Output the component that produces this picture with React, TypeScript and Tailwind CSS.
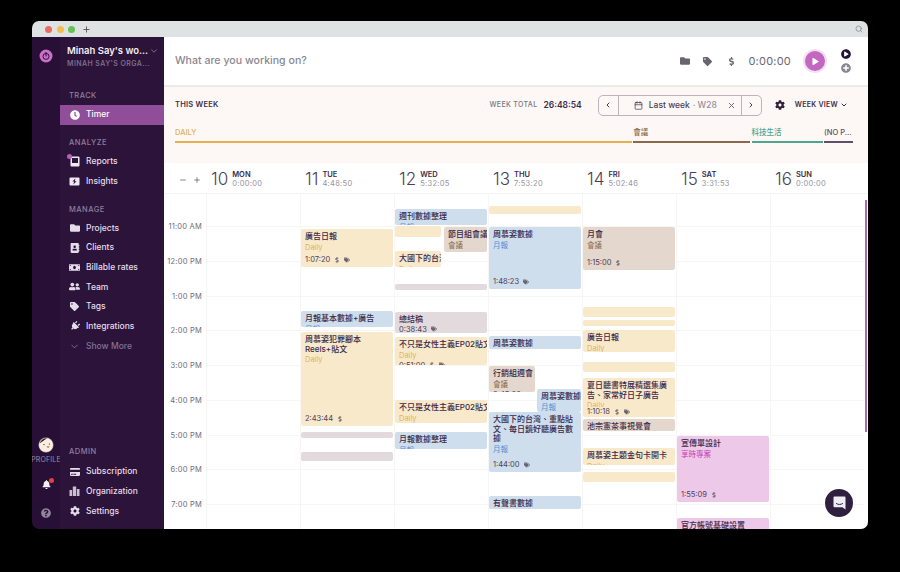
import type { ReactNode } from 'react';
import { ChevronDown, ChevronLeft, ChevronRight, Calendar, X, Search, Plus, Minus } from 'lucide-react';
import {
  FaClock, FaFolder, FaTag, FaTags, FaAddressBook, FaMoneyBill, FaUserFriends, FaPlug, FaCreditCard,
  FaCog, FaBell, FaQuestionCircle, FaPlay, FaPlusCircle, FaPlayCircle, FaDollarSign,
} from 'react-icons/fa';

const YELLOW = { box: 'bg-[#f9e9cb]', sub: 'text-[#e2b35c]' };
const BLUE = { box: 'bg-[#cfdeed]', sub: 'text-[#4e90d2]' };
const BROWN = { box: 'bg-[#e4d8ce]', sub: 'text-[#8a6b4d]' };
const MAUVE = { box: 'bg-[#e3dadd]', sub: 'text-[#6b5a6b]' };
const PINK = { box: 'bg-[#eec8e9]', sub: 'text-[#c23fb0]' };

type Ev = {
  day: number;
  top: number;
  bottom: number;
  left?: number;
  right?: number;
  title?: string;
  sub?: string;
  time?: string;
  money?: boolean;
  tag?: boolean;
  color: { box: string; sub: string };
  nowrap?: boolean;
  squeeze?: boolean;
};

// y values are screen rows, the grid starts at 194. left/right are offsets inside the day column
const events: Ev[] = [
  { day: 1, top: 229, bottom: 267, title: '廣告日報', sub: 'Daily', time: '1:07:20', money: true, tag: true, color: YELLOW },
  { day: 1, top: 311, bottom: 327, title: '月報基本數據+廣告', sub: '月報', color: BLUE, nowrap: true },
  { day: 1, top: 332, bottom: 426, title: '周慕姿犯罪腳本 Reels+貼文', sub: 'Daily', time: '2:43:44', money: true, color: YELLOW },
  { day: 1, top: 432, bottom: 438, color: MAUVE },
  { day: 1, top: 452, bottom: 461, color: MAUVE },
  { day: 2, top: 209, bottom: 225, title: '週刊數據整理', sub: '月報', color: BLUE },
  { day: 2, top: 226, bottom: 237, right: 47, color: YELLOW },
  { day: 2, top: 227, bottom: 252, left: 49, title: '節目組會議', sub: '會議', time: '0:45:00', color: BROWN, nowrap: true },
  { day: 2, top: 251, bottom: 267, right: 47, title: '大國下的台灣', sub: 'Daily', color: YELLOW, nowrap: true },
  { day: 2, top: 284, bottom: 285, color: MAUVE },
  { day: 2, top: 312, bottom: 333, title: '總結稿', time: '0:38:43', tag: true, color: MAUVE },
  { day: 2, top: 337, bottom: 365, title: '不只是女性主義EP02貼文', sub: 'Daily', time: '0:51:00', money: true, tag: true, color: YELLOW, nowrap: true },
  { day: 2, top: 400, bottom: 423, title: '不只是女性主義EP02貼文', sub: 'Daily', color: YELLOW, nowrap: true },
  { day: 2, top: 432, bottom: 449, title: '月報數據整理', sub: '月報', color: BLUE },
  { day: 3, top: 206, bottom: 214, color: YELLOW },
  { day: 3, top: 227, bottom: 289, title: '周慕姿數據', sub: '月報', time: '1:48:23', tag: true, color: BLUE },
  { day: 3, top: 336, bottom: 349, title: '周慕姿數據', color: BLUE },
  { day: 3, top: 366, bottom: 392, right: 47, title: '行銷組週會', sub: '會議', time: '0:45:00', color: BROWN, nowrap: true },
  { day: 3, top: 389, bottom: 412, left: 48, title: '周慕姿數據', sub: '月報', color: BLUE, nowrap: true },
  { day: 3, top: 412, bottom: 472, title: '大國下的台灣、重點貼文、每日鏡好聽廣告數據', sub: '月報', time: '1:44:00', tag: true, color: BLUE },
  { day: 3, top: 496, bottom: 509, title: '有聲書數據', color: BLUE },
  { day: 4, top: 227, bottom: 270, title: '月會', sub: '會議', time: '1:15:00', money: true, color: BROWN },
  { day: 4, top: 307, bottom: 317, color: YELLOW },
  { day: 4, top: 320, bottom: 322, color: YELLOW },
  { day: 4, top: 330, bottom: 352, title: '廣告日報', sub: 'Daily', color: YELLOW },
  { day: 4, top: 362, bottom: 372, color: YELLOW },
  { day: 4, top: 378, bottom: 417, title: '夏日聽書特展精選集廣告、家常好日子廣告', sub: 'Daily', time: '1:10:18', money: true, tag: true, color: YELLOW, squeeze: true },
  { day: 4, top: 419, bottom: 431, title: '池宗憲茶事視覺會', color: BROWN },
  { day: 4, top: 448, bottom: 465, title: '周慕姿主題金句卡開卡', sub: 'Daily', color: YELLOW },
  { day: 4, top: 472, bottom: 482, color: YELLOW },
  { day: 5, top: 436, bottom: 502, title: '宣傳單設計', sub: '享時專案', time: '1:55:09', money: true, color: PINK },
  { day: 5, top: 518, bottom: 560, title: '官方帳號基礎設置', color: PINK },
];

const days = [
  { n: '10', name: 'MON', total: '0:00:00' },
  { n: '11', name: 'TUE', total: '4:48:50' },
  { n: '12', name: 'WED', total: '5:32:05' },
  { n: '13', name: 'THU', total: '7:53:20' },
  { n: '14', name: 'FRI', total: '5:02:46' },
  { n: '15', name: 'SAT', total: '3:31:53' },
  { n: '16', name: 'SUN', total: '0:00:00' },
];

const hours = ['11:00 AM', '12:00 PM', '1:00 PM', '2:00 PM', '3:00 PM', '4:00 PM', '5:00 PM', '6:00 PM', '7:00 PM'];

const SectionLabel = ({ children }: { children: ReactNode }) => (
  <div className="h-[12px] pl-[9px] flex items-center text-[7.5px] font-medium tracking-[0.06em] text-[#8f7f9c] uppercase">{children}</div>
);

const NavItem = ({ icon, label, active, muted, dot }: { icon: ReactNode; label: string; active?: boolean; muted?: boolean; dot?: boolean }) => (
  <div className={`relative h-[19.7px] flex items-center pl-[9px] gap-[6px] text-[8.5px] font-medium ${active ? 'bg-[#8f4e97] text-white' : muted ? 'text-[#837291]' : 'text-[#e5dcea]'}`}>
    <span className="w-[11px] flex justify-center shrink-0">{icon}</span>
    {label}
    {dot && <span className="absolute left-[7px] top-[2px] w-[5px] h-[5px] rounded-full bg-[#b760b8]" />}
  </div>
);

const ReportsIcon = () => (
  <svg width="10" height="11" viewBox="0 0 10 11">
    <rect x="0.5" y="0.5" width="9" height="10" rx="1" fill="#efe8f2" />
    <rect x="2" y="2" width="6" height="5" fill="#2c1339" />
  </svg>
);

const InsightsIcon = () => (
  <svg width="11" height="9" viewBox="0 0 11 9">
    <rect x="0.5" y="0.5" width="10" height="8" rx="1" fill="#efe8f2" />
    <path d="M6.4 1.6L3.4 4.6h1.8L4.2 7.4l3.4-3.2H5.8z" fill="#2c1339" />
  </svg>
);

const OrganizationIcon = () => (
  <svg width="11" height="10" viewBox="0 0 11 10" fill="#c9bfd0">
    <rect x="0.5" y="4" width="2.6" height="6" />
    <rect x="3.8" y="0.5" width="3.4" height="9.5" />
    <rect x="7.9" y="3" width="2.6" height="7" />
  </svg>
);

const LogoIcon = () => (
  <svg width="14" height="14" viewBox="0 0 14 14">
    <circle cx="7" cy="7" r="6.5" fill="#cb6fc9" />
    <circle cx="7" cy="7.4" r="3" fill="none" stroke="#2c1338" strokeWidth="1" />
    <path d="M7 3.4v3.6" stroke="#2c1338" strokeWidth="1" strokeLinecap="round" />
  </svg>
);

const Avatar = () => (
  <svg width="16" height="16" viewBox="0 0 16 16">
    <circle cx="8" cy="8" r="7.5" fill="#fbeee0" stroke="#3c2a4a" strokeWidth="0.5" />
    <path d="M1.5 6.5C3 2.5 6 1 9 1.2 6.5 2.6 4.5 4.5 1.5 6.5z" fill="#2a1a20" />
    <path d="M8.4 9.5c1 1.6 2.6 1.4 3.2 0z" fill="#b23a3a" />
    <circle cx="6" cy="7.6" r="0.6" fill="#2a1a20" />
    <circle cx="11.4" cy="7" r="0.6" fill="#2a1a20" />
  </svg>
);

const IconRail = () => (
  <div className="w-[28px] shrink-0 bg-[#270f35] flex flex-col items-center pt-[12px] pb-[11px]">
    <LogoIcon />
    <div className="mt-auto flex flex-col items-center">
      <Avatar />
      <span className="mt-[2px] text-[7px] tracking-[0.02em] text-[#9c8ca8]">PROFILE</span>
      <div className="relative mt-[15px] text-[#f4eef6]">
        <FaBell size={9} />
        <span className="absolute -right-[3px] -top-[2px] w-[5px] h-[5px] rounded-full bg-[#e0433a]" />
      </div>
      <FaQuestionCircle size={10} className="mt-[19px] text-[#93859e]" />
    </div>
  </div>
);

const Sidebar = () => (
  <div className="w-[104px] shrink-0 bg-[#2c1339] flex flex-col pb-[8px]">
    <div className="pt-[8px] pl-[7px] pr-[5px]">
      <div className="flex items-center justify-between text-[9.5px] font-semibold text-[#f4edf6] leading-[12px] whitespace-nowrap">
        Minah Say's wo...
        <ChevronDown size={10} className="text-[#8f7f9c]" />
      </div>
      <div className="mt-[2px] text-[7px] font-semibold tracking-[0.06em] text-[#7d6b8a] leading-[9px] whitespace-nowrap">MINAH SAY'S ORGA...</div>
    </div>
    <div className="mt-[22px]"><SectionLabel>Track</SectionLabel></div>
    <div className="mt-[3px]"><NavItem active icon={<FaClock size={10} />} label="Timer" /></div>
    <div className="mt-[12px]"><SectionLabel>Analyze</SectionLabel></div>
    <div className="mt-[3px]">
      <NavItem dot icon={<ReportsIcon />} label="Reports" />
      <NavItem icon={<InsightsIcon />} label="Insights" />
    </div>
    <div className="mt-[13px]"><SectionLabel>Manage</SectionLabel></div>
    <div className="mt-[2px]">
      <NavItem icon={<FaFolder size={10} />} label="Projects" />
      <NavItem icon={<FaAddressBook size={10} />} label="Clients" />
      <NavItem icon={<FaMoneyBill size={11} />} label="Billable rates" />
      <NavItem icon={<FaUserFriends size={11} />} label="Team" />
      <NavItem icon={<FaTag size={9} />} label="Tags" />
      <NavItem icon={<FaPlug size={10} className="rotate-45" />} label="Integrations" />
      <NavItem muted icon={<ChevronDown size={11} />} label="Show More" />
    </div>
    <div className="mt-auto">
      <SectionLabel>Admin</SectionLabel>
      <div className="mt-[4px]">
        <NavItem icon={<FaCreditCard size={10} />} label="Subscription" />
        <NavItem icon={<OrganizationIcon />} label="Organization" />
        <NavItem icon={<FaCog size={10} />} label="Settings" />
      </div>
    </div>
  </div>
);

const TimerBar = () => (
  <div className="h-[50px] shrink-0 bg-white border-b-2 border-[#ecebea] flex items-center pl-[11px] pr-[17px]">
    <span className="text-[10.6px] font-medium text-[#8b8792]">What are you working on?</span>
    <div className="ml-auto flex items-center text-[#6a6470]">
      <FaFolder size={10} />
      <FaTag size={9} className="ml-[13px]" />
      <FaDollarSign size={9} className="ml-[15px]" />
      <span className="ml-[12px] text-[11px] tracking-[0.02em] text-[#6b6672]">0:00:00</span>
      <div className="ml-[14px] w-[20px] h-[20px] rounded-full bg-[#c368c0] ring-2 ring-[#f3dff2] flex items-center justify-center text-white">
        <FaPlay size={7} className="ml-[1px]" />
      </div>
      <div className="ml-[16px] flex flex-col gap-[4px]">
        <FaPlayCircle size={10} className="text-[#241430]" />
        <FaPlusCircle size={10} className="text-[#8b8792]" />
      </div>
    </div>
  </div>
);

const Summary = () => (
  <div className="h-[76px] shrink-0 bg-[#fdf8f5] pl-[11px] pr-[15px] flex flex-col">
    <div className="mt-[8px] h-[20px] flex items-center">
      <span className="text-[7.5px] font-semibold tracking-[0.03em] text-[#3c2c4a]">THIS WEEK</span>
      <span className="ml-auto text-[7px] font-medium tracking-[0.05em] text-[#7a7480]">WEEK TOTAL</span>
      <span className="ml-[6px] text-[8.5px] font-semibold text-[#3c2c4a]">26:48:54</span>
      <div className="ml-[16px] w-[164px] h-[21px] border border-[#b9b5bb] rounded-[5px] flex items-center text-[#4a3e54]">
        <div className="w-[20px] h-full flex items-center justify-center border-r border-[#b9b5bb]"><ChevronLeft size={8} strokeWidth={3} /></div>
        <div className="flex-1 flex items-center pl-[15px] pr-[5px] text-[8.5px] font-medium whitespace-nowrap">
          <Calendar size={9} className="mr-[6px]" />
          Last week<span className="ml-[3px] text-[#96919b]">· W28</span>
          <X size={9} strokeWidth={2.5} className="ml-auto text-[#6a6470]" />
        </div>
        <div className="w-[20px] h-full flex items-center justify-center border-l border-[#b9b5bb]"><ChevronRight size={8} strokeWidth={3} /></div>
      </div>
      <FaCog size={10} className="ml-[13px] text-[#2e2038]" />
      <span className="ml-[10px] text-[7px] font-semibold tracking-[0.04em] text-[#3c2c4a]">WEEK VIEW</span>
      <ChevronDown size={8} strokeWidth={3} className="ml-[2px] mr-[5px] text-[#3c2c4a]" />
    </div>
    <div className="mt-[12px] flex gap-[1.5px] text-[7.5px] font-medium">
      <div className="w-[457px]"><div className="h-[11px] leading-[11px] text-[#e2b35c]">DAILY</div><div className="mt-[3px] h-[2px] bg-[#e6b04e]" /></div>
      <div className="w-[117px]"><div className="h-[11px] leading-[11px] text-[#8a6b4d]">會議</div><div className="mt-[3px] h-[2px] bg-[#8a6a4a]" /></div>
      <div className="w-[71px]"><div className="h-[11px] leading-[11px] text-[#4fa58e]">科技生活</div><div className="mt-[3px] h-[2px] bg-[#4fa58e]" /></div>
      <div className="w-[29px]"><div className="h-[11px] leading-[11px] text-[#5d5068] whitespace-nowrap">(NO P...</div><div className="mt-[3px] h-[2px] bg-[#5d5068]" /></div>
    </div>
  </div>
);

const DayHeader = () => (
  <div className="h-[31px] shrink-0 bg-white border-b border-[#f6f4f2] flex pt-[3px]">
    <div className="w-[42px] shrink-0 flex items-center justify-end gap-[6px] pr-[5px] text-[#6f6a76]">
      <Minus size={8} strokeWidth={2.5} />
      <Plus size={8} strokeWidth={2.5} />
    </div>
    {days.map((d) => (
      <div key={d.n} className="w-[94px] shrink-0 flex items-center pl-[5px] gap-[4px]">
        <span className="text-[17px] font-light text-[#4b4152] leading-none">{d.n}</span>
        <div className="flex flex-col">
          <span className="text-[7.5px] font-semibold text-[#3c2c4a] leading-[9px]">{d.name}</span>
          <span className="text-[7.5px] tracking-[0.04em] text-[#98939e] leading-[10px]">{d.total}</span>
        </div>
      </div>
    ))}
  </div>
);

const EventCard = ({ ev }: { ev: Ev }) => {
  const left = ev.left ?? 0;
  const right = ev.right ?? 1;
  return (
    <div
      className={`absolute rounded-[2px] overflow-hidden px-[4px] pt-[3px] flex flex-col ${ev.squeeze ? 'pb-[1px]' : 'pb-[3px]'} ${ev.color.box}`}
      style={{ top: ev.top - 194, height: ev.bottom - ev.top, left, right }}
    >
      {ev.title && (
        <div className={`shrink-0 text-[8px] font-medium leading-[9.6px] text-[#3a2a4a] ${ev.nowrap ? 'whitespace-nowrap' : ''}`}>{ev.title}</div>
      )}
      {ev.sub && <div className={`mt-[1px] text-[7.5px] leading-[10px] ${ev.squeeze ? 'min-h-0 overflow-hidden' : 'shrink-0'} ${ev.color.sub}`}>{ev.sub}</div>}
      {ev.time && (
        <div className="shrink-0 mt-auto flex items-center gap-[4px] text-[7.5px] leading-[9px] text-[#4c4256]">
          {ev.time}
          {ev.money && <FaDollarSign size={6} className="text-[#6a6470]" />}
          {ev.tag && <FaTags size={6} className="text-[#6a6470]" />}
        </div>
      )}
    </div>
  );
};

const HourLines = () => (
  <div className="pt-[32px]">
    {hours.map((h) => (
      <div key={h} className="h-[34.75px] border-t border-[#f8f6f4]" />
    ))}
  </div>
);

const WeekGrid = () => (
  <div className="flex-1 min-h-0 flex bg-white overflow-hidden">
    <div className="w-[42px] shrink-0 pt-[15.4px] pr-[4px]">
      {hours.map((h) => (
        <div key={h} className="h-[34.75px] flex items-center justify-end text-[7.5px] tracking-[0.03em] text-[#6f6a76] whitespace-nowrap">{h}</div>
      ))}
    </div>
    {days.map((d, i) => (
      <div key={d.n} className="relative w-[94px] shrink-0 border-l border-[#f8f6f4]">
        <HourLines />
        {events.filter((e) => e.day === i).map((e, j) => <EventCard key={j} ev={e} />)}
      </div>
    ))}
  </div>
);

const App = () => (
  <div className="w-[900px] h-[572px] bg-black pt-[21px] pl-[32px] overflow-hidden [font-family:Inter,'Noto_Sans_CJK_TC',sans-serif]">
    <div className="relative w-[836px] h-[508px] rounded-t-[7px] rounded-b-[7px] overflow-hidden flex flex-col">
      <div className="h-[16px] shrink-0 bg-[#dfe2e3] flex items-center pl-[13px] pr-[5px]">
        <span className="w-[7px] h-[7px] rounded-full bg-[#ee6a5f]" />
        <span className="ml-[4.5px] w-[7px] h-[7px] rounded-full bg-[#f5bd4f]" />
        <span className="ml-[4.5px] w-[7px] h-[7px] rounded-full bg-[#61c454]" />
        <Plus size={9} strokeWidth={2} className="ml-[7px] text-[#3c3c3c]" />
        <Search size={8} className="ml-auto text-[#7d8082]" />
      </div>
      <div className="flex-1 min-h-0 flex">
        <IconRail />
        <Sidebar />
        <div className="flex-1 min-w-0 flex flex-col">
          <TimerBar />
          <Summary />
          <DayHeader />
          <WeekGrid />
        </div>
      </div>
      <div className="absolute right-[1px] top-[179px] w-[2px] h-[232px] bg-[#b266ad]" />
      <div className="absolute right-[15px] bottom-[12px] w-[28px] h-[28px] rounded-full bg-[#2f2040] flex items-center justify-center">
        <svg width="13" height="14" viewBox="0 0 13 14">
          <path d="M1.5 0.5h10a1 1 0 0 1 1 1v12l-3-2.2H1.5a1 1 0 0 1-1-1v-8.8a1 1 0 0 1 1-1z" fill="#f0edf2" />
          <path d="M3.4 7.6c1.8 1.2 4.4 1.2 6.2 0" fill="none" stroke="#2f2040" strokeWidth="1" strokeLinecap="round" />
        </svg>
      </div>
    </div>
  </div>
);

export default App;
